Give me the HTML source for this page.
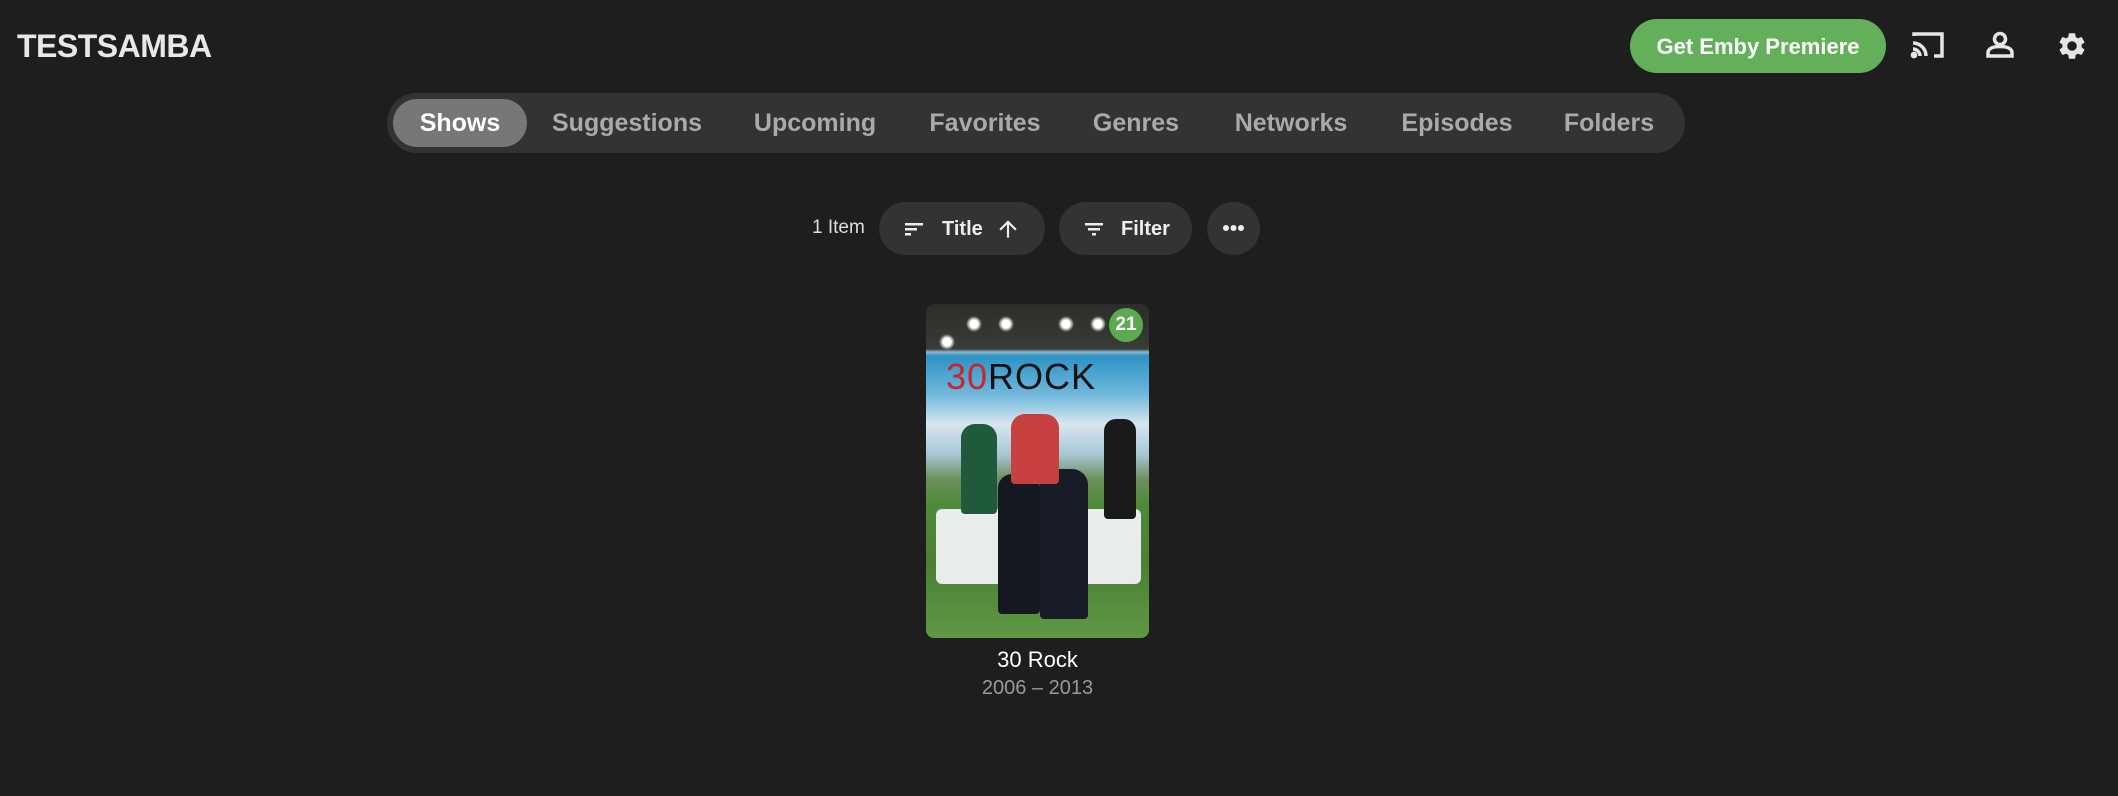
<!DOCTYPE html>
<html><head><meta charset="utf-8"><style>
*{margin:0;padding:0;box-sizing:border-box}
body{width:2118px;height:796px;background:#1e1e1e;font-family:"Liberation Sans",sans-serif;position:relative;overflow:hidden;color:#eee}
.abs{position:absolute}
.logo{left:17px;top:28px;font-size:32px;font-weight:bold;color:#e8e8e8;letter-spacing:-0.5px}
.prem{left:1630px;top:19px;width:256px;height:54px;border-radius:27px;background:#64b05a;color:#fff;font-weight:bold;font-size:22px;line-height:56px;text-align:center}
.tabs{left:387px;top:93px;width:1298px;height:60px;border-radius:30px;background:#333}
.pill{left:393px;top:99px;width:134px;height:48px;border-radius:24px;background:#777}
.tab{top:109px;font-size:25px;font-weight:bold;color:#aaa;transform:translateX(-50%);white-space:nowrap}
.btn{top:202px;height:53px;border-radius:27px;background:#333;color:#eee;font-weight:bold;font-size:20px}
</style></head><body>
<div class="abs logo">TESTSAMBA</div>
<div class="abs prem">Get Emby Premiere</div>
<svg class="abs" style="left:1910px;top:31px" width="36" height="28" viewBox="0 0 36 28" fill="none" stroke="#e6e6e6" stroke-width="3.5"><path d="M4 5 V3 H32 V25 H24"/><path d="M3 12 A13 13 0 0 1 16 25"/><path d="M3 18 A7 7 0 0 1 10 25"/><circle cx="4" cy="24" r="1.6" fill="#e6e6e6"/></svg>
<svg class="abs" style="left:1985px;top:31px" width="30" height="28" viewBox="0 0 30 28" fill="none" stroke="#e6e6e6" stroke-width="3.5"><circle cx="15" cy="8" r="5.5"/><path d="M3 25 V22 C3 17 9 15.5 15 15.5 C21 15.5 27 17 27 22 V25 Z"/></svg>
<svg class="abs" style="left:2056px;top:30px" width="32" height="32" viewBox="0 0 24 24"><path fill="#e6e6e6" d="M19.14 12.94c.04-.3.06-.61.06-.94 0-.32-.02-.64-.07-.94l2.030-1.58a.49.49 0 0 0 .12-.61l-1.92-3.32a.49.49 0 0 0-.59-.22l-2.39.96c-.5-.38-1.030-.7-1.62-.94l-.36-2.540a.48.48 0 0 0-.48-.41h-3.84c-.24 0-.43.17-.47.41l-.36 2.54c-.59.24-1.13.57-1.62.94l-2.39-.96a.49.49 0 0 0-.59.22L2.74 8.87c-.12.21-.08.47.12.61l2.03 1.58c-.05.3-.09.63-.09.94s.02.64.07.94l-2.03 1.58a.49.49 0 0 0-.12.61l1.92 3.32c.12.22.37.29.59.22l2.39-.96c.5.38 1.03.7 1.62.94l.36 2.54c.05.24.24.41.48.41h3.84c.24 0 .44-.17.47-.41l.36-2.54c.59-.24 1.13-.56 1.62-.94l2.39.96c.22.08.47 0 .59-.22l1.92-3.32c.12-.22.07-.47-.12-.61l-2.01-1.58zM12 15.6A3.6 3.6 0 1 1 12 8.4a3.6 3.6 0 0 1 0 7.2z"/></svg>
<div class="abs tabs"></div>
<div class="abs pill"></div>
<div class="abs tab" style="left:460px;color:#fff">Shows</div>
<div class="abs tab" style="left:627px">Suggestions</div>
<div class="abs tab" style="left:815px">Upcoming</div>
<div class="abs tab" style="left:985px">Favorites</div>
<div class="abs tab" style="left:1136px">Genres</div>
<div class="abs tab" style="left:1291px">Networks</div>
<div class="abs tab" style="left:1457px">Episodes</div>
<div class="abs tab" style="left:1609px">Folders</div>
<div class="abs" style="left:812px;top:217px;font-size:19px;color:#ddd">1 Item</div>
<div class="abs btn" style="left:879px;width:166px">
 <svg class="abs" style="left:23px;top:15px" width="24" height="24" viewBox="0 0 24 24"><path fill="#eee" d="M3 6h18v2.5H3zM3 11h12v2.5H3zM3 16h6v2.5H3z"/></svg>
 <span class="abs" style="left:63px;top:16px">Title</span>
 <svg class="abs" style="left:116px;top:14px" width="26" height="26" viewBox="0 0 24 24"><path fill="#eee" d="M4 12l1.4 1.4L11 7.8V20h2V7.8l5.6 5.6L20 12l-8-8z"/></svg>
</div>
<div class="abs btn" style="left:1059px;width:133px">
 <svg class="abs" style="left:23px;top:15px" width="24" height="24" viewBox="0 0 24 24"><path fill="#eee" d="M3 6h18v2.5H3zM6 11h12v2.5H6zM10 16h4v2.5h-4z"/></svg>
 <span class="abs" style="left:62px;top:16px">Filter</span>
</div>
<div class="abs btn" style="left:1207px;width:53px">
 <svg class="abs" style="left:14px;top:20px" width="25" height="12" viewBox="0 0 25 12"><circle cx="5" cy="6" r="3" fill="#eee"/><circle cx="12.5" cy="6" r="3" fill="#eee"/><circle cx="20" cy="6" r="3" fill="#eee"/></svg>
</div>
<div class="abs" style="left:926px;top:304px;width:223px;height:334px;border-radius:8px;overflow:hidden;background:linear-gradient(#2a2d28 0,#3a3c36 45px,#8ab8d0 48px,#2d93c4 52px,#6fb7dc 90px,#d8e6ee 120px,#a9c7d8 150px,#6d8f5e 175px,#4f8a3a 200px,#4d7f36 260px,#5d9a43 334px)">
 <div class="abs" style="left:0;top:0;width:223px;height:46px;background:radial-gradient(circle at 48px 20px,#fff 4px,transparent 8px),radial-gradient(circle at 80px 20px,#fff 4px,transparent 8px),radial-gradient(circle at 140px 20px,#fff 4px,transparent 8px),radial-gradient(circle at 172px 20px,#fff 4px,transparent 8px),radial-gradient(circle at 21px 38px,#fff 4px,transparent 8px)"></div>
 <div class="abs" style="left:20px;top:55px;font-size:36px;line-height:36px;letter-spacing:1px"><span style="color:#c8262b">30</span><span style="color:#111">ROCK</span></div>
 <div class="abs" style="left:10px;top:205px;width:205px;height:75px;background:#e8ecea;border-radius:6px"></div>
 <div class="abs" style="left:72px;top:170px;width:42px;height:140px;background:#151820;border-radius:14px 14px 4px 4px"></div>
 <div class="abs" style="left:114px;top:165px;width:48px;height:150px;background:#181c28;border-radius:16px 16px 4px 4px"></div>
 <div class="abs" style="left:35px;top:120px;width:36px;height:90px;background:#1f5a3a;border-radius:14px 14px 4px 4px"></div>
 <div class="abs" style="left:178px;top:115px;width:32px;height:100px;background:#1a1a1a;border-radius:12px 12px 4px 4px"></div>
 <div class="abs" style="left:85px;top:110px;width:48px;height:70px;background:#c94040;border-radius:14px 14px 4px 4px"></div>
 <div class="abs" style="left:183px;top:4px;width:34px;height:34px;border-radius:50%;background:#5aaa50;color:#fff;font-weight:bold;font-size:19px;line-height:34px;text-align:center">21</div>
</div>
<div class="abs" style="left:926px;top:647px;width:223px;text-align:center;font-size:22px;color:#fff">30 Rock</div>
<div class="abs" style="left:926px;top:677px;width:223px;text-align:center;font-size:20px;color:#999">2006 – 2013</div>
</body></html>
